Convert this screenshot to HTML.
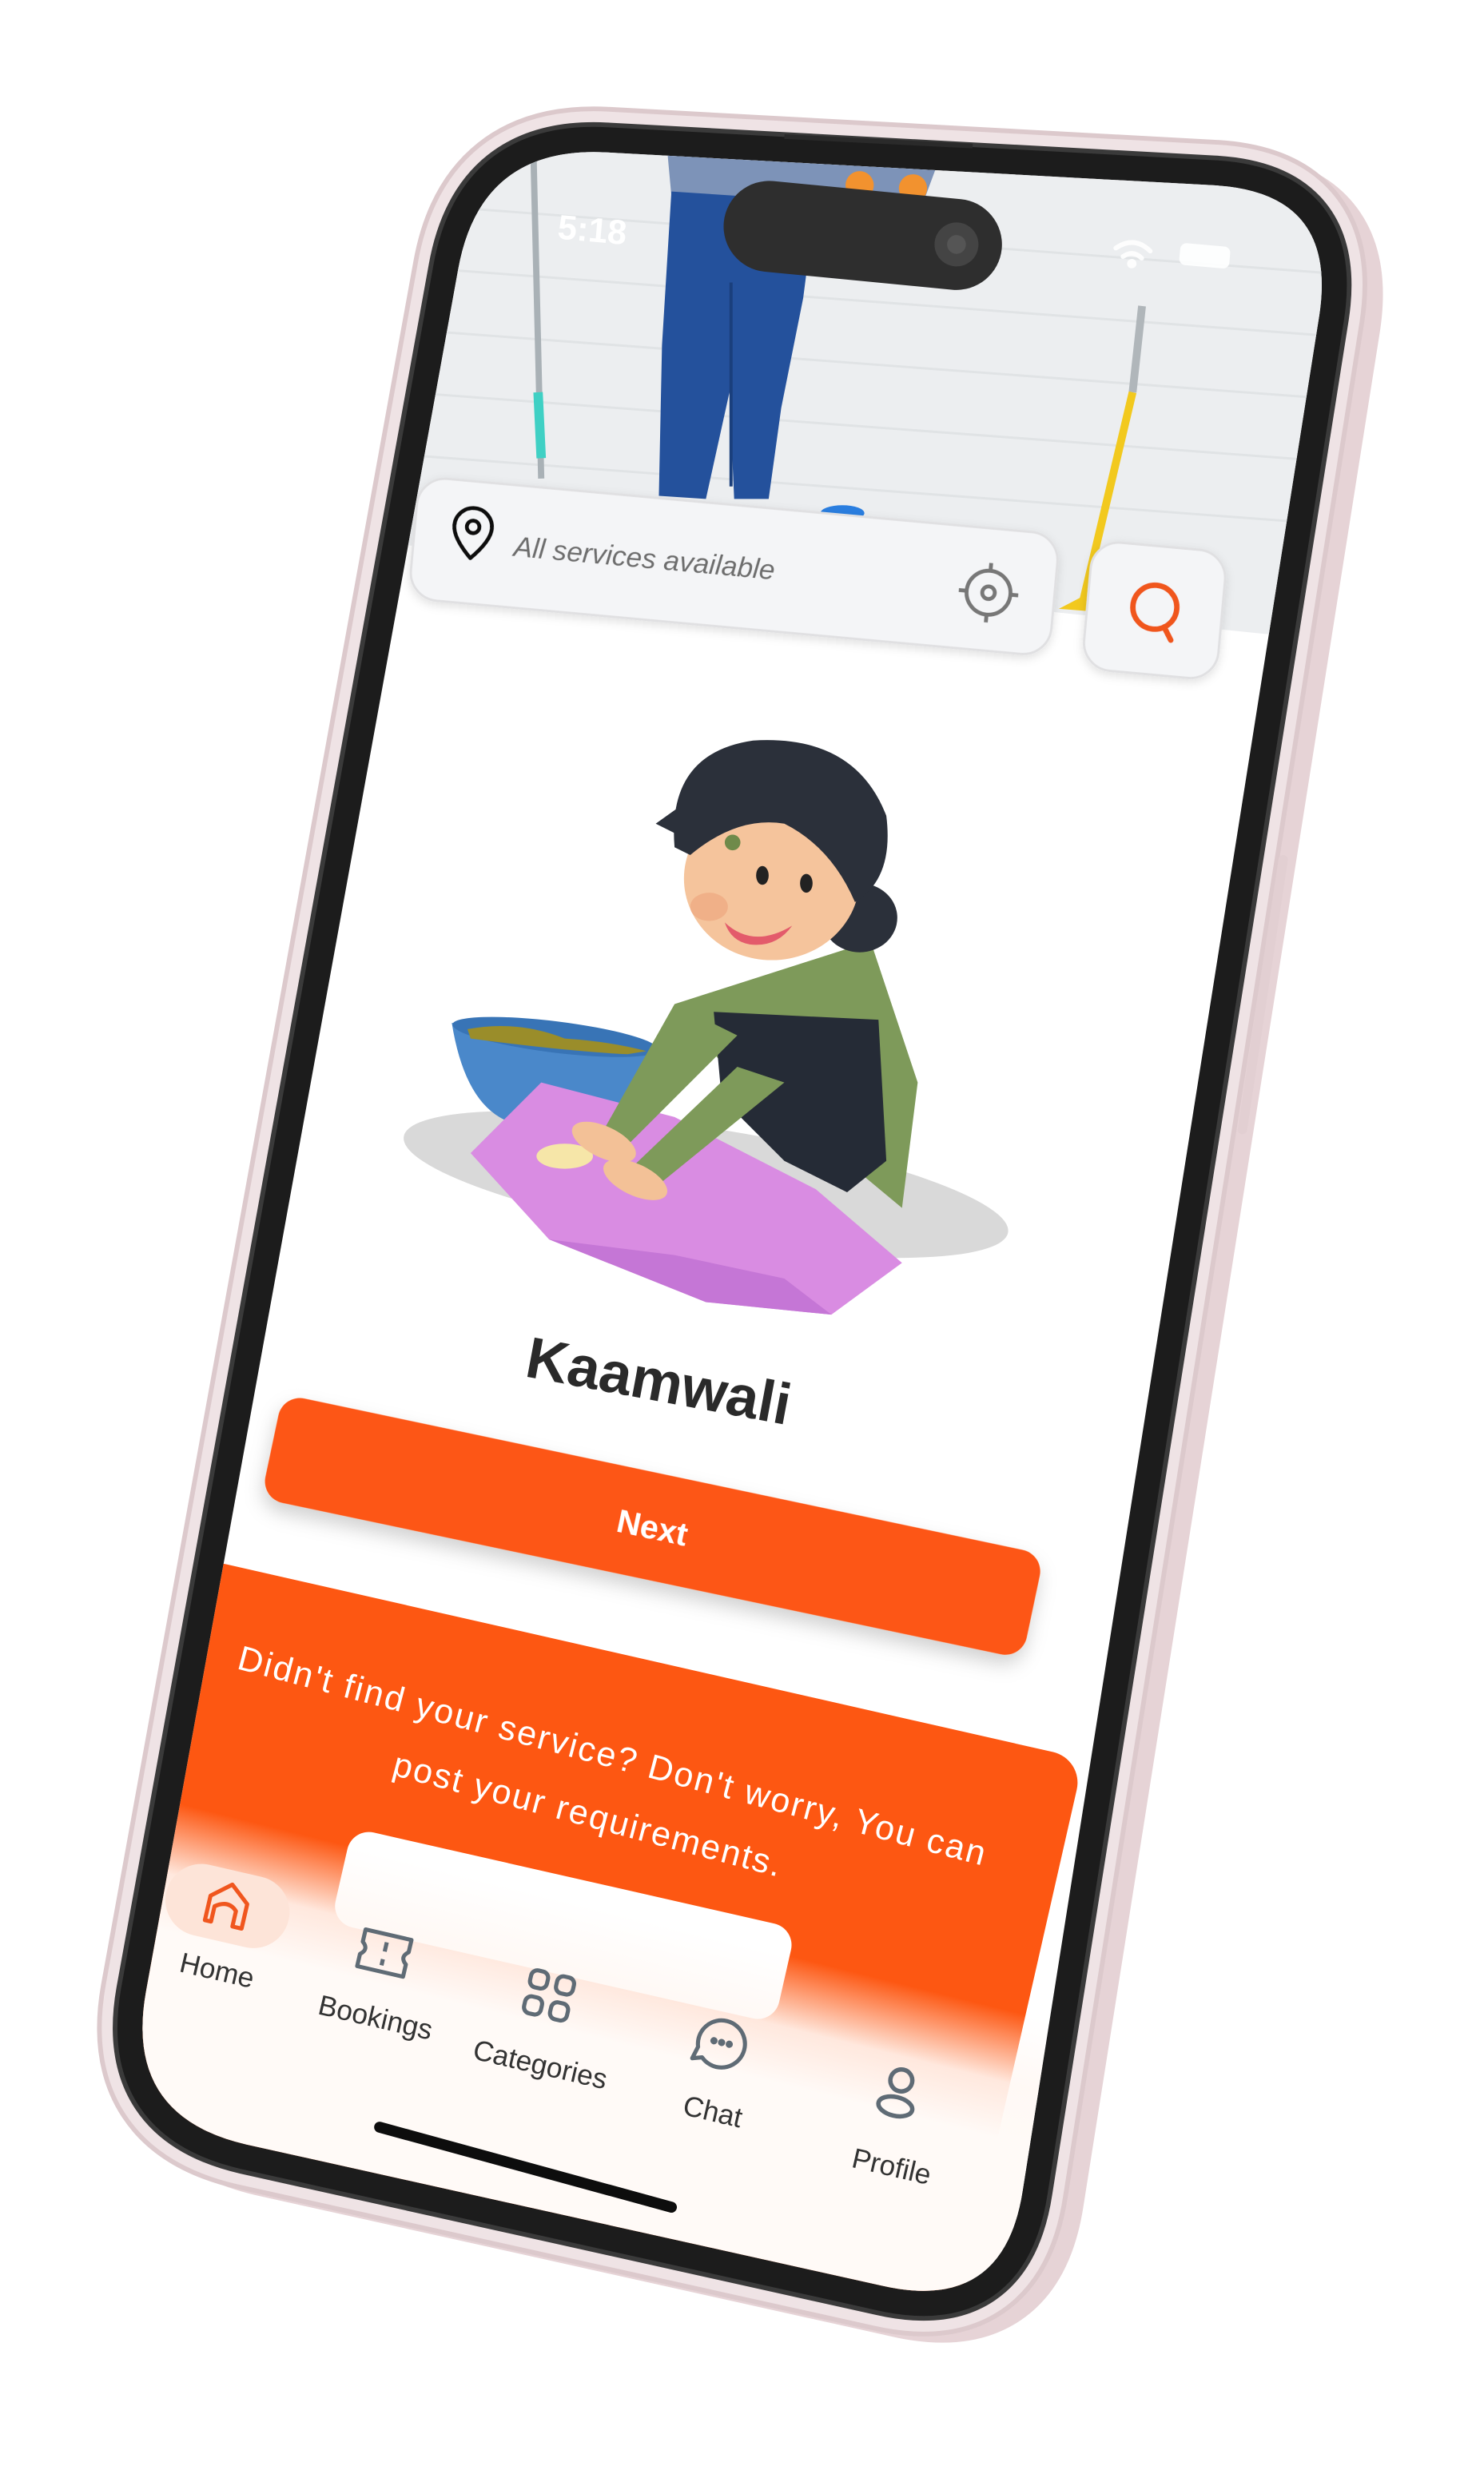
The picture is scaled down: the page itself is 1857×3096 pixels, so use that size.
<!DOCTYPE html>
<html><head><meta charset="utf-8"><style>
html,body{margin:0;padding:0;background:#fff;width:1857px;height:3096px;overflow:hidden;}
svg{display:block;}
text{font-family:"Liberation Sans",sans-serif;}
</style></head><body>
<svg width="1857" height="3096" viewBox="0 0 946 1577" xmlns="http://www.w3.org/2000/svg">
<defs>
<clipPath id="scr"><path d="M386,97 L773,118 Q853,122 841,201 L652,1396 Q640,1475 562,1457 L157,1367 Q79,1349 93,1270 L292,172 Q306,93 386,97 Z"/></clipPath>
<filter id="sh" x="-20%" y="-50%" width="140%" height="200%"><feDropShadow dx="0" dy="6" stdDeviation="6" flood-color="#000" flood-opacity="0.18"/></filter>
<filter id="sh2" x="-20%" y="-50%" width="140%" height="200%"><feDropShadow dx="0" dy="2" stdDeviation="3" flood-color="#000" flood-opacity="0.12"/></filter>
<linearGradient id="tabg" x1="0" y1="0" x2="0" y2="1">
<stop offset="0" stop-color="#fff8f4" stop-opacity="0"/>
<stop offset="0.1" stop-color="#fff8f4" stop-opacity="0.9"/>
<stop offset="0.18" stop-color="#fffaf7" stop-opacity="1"/>
<stop offset="1" stop-color="#fffaf7" stop-opacity="1"/>
</linearGradient>
</defs>

<path transform="translate(12,6)" d="M386,97 L773,118 Q853,122 841,201 L652,1396 Q640,1475 562,1457 L157,1367 Q79,1349 93,1270 L292,172 Q306,93 386,97 Z" fill="#e6d3d6" stroke="#e6d3d6" stroke-width="54" stroke-linejoin="round"/>
<path d="M386,97 L773,118 Q853,122 841,201 L652,1396 Q640,1475 562,1457 L157,1367 Q79,1349 93,1270 L292,172 Q306,93 386,97 Z" fill="#1c1c1c" stroke="#dcc9cc" stroke-width="58" stroke-linejoin="round"/>
<path d="M386,97 L773,118 Q853,122 841,201 L652,1396 Q640,1475 562,1457 L157,1367 Q79,1349 93,1270 L292,172 Q306,93 386,97 Z" fill="#1c1c1c" stroke="#efe3e5" stroke-width="52" stroke-linejoin="round"/>
<path d="M386,97 L773,118 Q853,122 841,201 L652,1396 Q640,1475 562,1457 L157,1367 Q79,1349 93,1270 L292,172 Q306,93 386,97 Z" fill="#1c1c1c" stroke="#3a3a3a" stroke-width="38" stroke-linejoin="round"/>
<path d="M386,97 L773,118 Q853,122 841,201 L652,1396 Q640,1475 562,1457 L157,1367 Q79,1349 93,1270 L292,172 Q306,93 386,97 Z" fill="#1c1c1c" stroke="#1c1c1c" stroke-width="32" stroke-linejoin="round"/>
<path d="M818,548 L792,720" stroke="#e2cfd2" stroke-width="6" stroke-linecap="round"/>

<g clip-path="url(#scr)">
<rect x="0" y="0" width="946" height="1577" fill="#ffffff"/>
<polygon points="200,40 900,40 900,410 806,404 255,347 200,341" fill="#eceef0"/>
<g stroke="#dfe2e4" stroke-width="1.5" opacity="0.9">
<line x1="260" y1="170" x2="860" y2="215"/><line x1="260" y1="210" x2="860" y2="255"/>
<line x1="260" y1="250" x2="860" y2="295"/><line x1="260" y1="290" x2="860" y2="335"/>
<line x1="260" y1="130" x2="860" y2="175"/>
</g>
<polygon points="425,92 600,98 590,125 520,120 470,130 428,125" fill="#7d93b8"/>
<circle cx="548" cy="118" r="9" fill="#f2922f"/><circle cx="582" cy="120" r="9" fill="#f2922f"/>
<path d="M428,122 L520,128 L512,190 L498,260 L490,318 L468,318 L465,250 L450,318 L420,316 L422,220 Z" fill="#24519c"/>
<path d="M466,180 L466,310" stroke="#1a3f7c" stroke-width="2"/>
<line x1="340" y1="95" x2="345" y2="305" stroke="#a9b1b6" stroke-width="4"/>
<line x1="343" y1="250" x2="345" y2="292" stroke="#3fd0c4" stroke-width="6"/>
<line x1="728" y1="195" x2="722" y2="250" stroke="#b0b6ba" stroke-width="5"/>
<line x1="722" y1="250" x2="690" y2="385" stroke="#f2c91e" stroke-width="5"/>
<path d="M675,388 L700,375 L700,390 Z" fill="#f2c91e"/>
<ellipse cx="537" cy="327" rx="14" ry="5" fill="#2a7ee0"/>
<text x="355" y="152" font-size="22" fill="#ffffff" font-weight="bold" transform="rotate(5 355 152)">5:18</text>
<g transform="translate(550,150) rotate(5.5)">
<rect x="-89" y="-29" width="178" height="58" rx="29" fill="#2e2e2e"/>
<circle cx="60" cy="0" r="14" fill="#444"/><circle cx="60" cy="0" r="6" fill="#555"/>
</g>
<g transform="translate(722,162) rotate(5)" fill="none" stroke="#fff" stroke-width="3" stroke-linecap="round" opacity="0.9">
<path d="M-11,-3 Q0,-12 11,-3"/><path d="M-6,2 Q0,-3 6,2"/><circle cx="0" cy="6" r="1.5" fill="#fff"/>
</g>
<rect x="752" y="156" width="32" height="14" rx="4" fill="#fff" opacity="0.9" transform="rotate(5 768 163)"/>

<g transform="translate(468,361) rotate(5.2)" filter="url(#sh2)">
<rect x="-205" y="-39" width="410" height="78" rx="18" fill="#f4f5f7" stroke="#e0e0e2" stroke-width="1.5"/>
<path d="M-168,10 C-178,0 -180,-6 -180,-10 A12,12 0 0 1 -156,-10 C-156,-6 -158,0 -168,10 Z" fill="none" stroke="#111" stroke-width="2.5" stroke-linejoin="round"/>
<circle cx="-168" cy="-10" r="4" fill="none" stroke="#111" stroke-width="2.5"/>
<text x="-141" y="6" font-size="18" fill="#6d6d6d" font-style="italic">All services available</text>
<g transform="translate(163,2)" fill="none" stroke="#777" stroke-width="2.5">
<circle r="14"/><circle r="4"/><line x1="0" y1="-19" x2="0" y2="-14"/><line x1="0" y1="14" x2="0" y2="19"/><line x1="-19" y1="0" x2="-14" y2="0"/><line x1="14" y1="0" x2="19" y2="0"/>
</g>
</g>
<g transform="translate(736,389) rotate(5.2)" filter="url(#sh2)">
<rect x="-43" y="-41" width="86" height="82" rx="18" fill="#f4f5f7" stroke="#e0e0e2" stroke-width="1.5"/>
<circle cx="0" cy="-2" r="14" fill="none" stroke="#f0561e" stroke-width="3.5"/>
<line x1="7" y1="10" x2="12" y2="18" stroke="#f0561e" stroke-width="3.5" stroke-linecap="round"/>
</g>

<ellipse cx="450" cy="755" rx="195" ry="36" fill="#d9d9d9" transform="rotate(9 450 755)"/>
<path d="M288,652 L420,668 L412,705 Q380,728 322,714 Q296,702 288,652 Z" fill="#4a88ca"/>
<ellipse cx="354" cy="661" rx="66" ry="10" fill="#3874b6" transform="rotate(7 354 661)"/>
<path d="M298,656 Q330,650 360,662 Q390,664 412,670 L400,672 Q360,670 300,662 Z" fill="#9a8d2a"/>
<path d="M300,735 L345,690 L430,712 L520,758 L575,805 L530,838 L450,830 L350,790 Z" fill="#d98ce2"/>
<path d="M350,790 L450,830 L530,838 L500,815 L430,800 Z" fill="#c576d6"/>
<ellipse cx="360" cy="737" rx="18" ry="8" fill="#f6e6a8"/>
<path d="M430,640 L555,600 L585,690 L575,770 L545,745 L470,690 Z" fill="#7e9a5a"/>
<path d="M455,645 L560,650 L565,740 L540,760 L500,740 L460,700 Z" fill="#252b36"/>
<path d="M430,640 L470,660 L400,730 L385,720 Z" fill="#7e9a5a"/>
<path d="M470,680 L500,690 L420,755 L405,742 Z" fill="#7e9a5a"/>
<ellipse cx="385" cy="728" rx="22" ry="10" fill="#f3c197" transform="rotate(25 385 728)"/>
<ellipse cx="405" cy="752" rx="22" ry="10" fill="#f3c197" transform="rotate(25 405 752)"/>
<ellipse cx="548" cy="585" rx="24" ry="22" fill="#2b303a"/>
<ellipse cx="492" cy="560" rx="56" ry="52" fill="#f5c49c"/>
<path d="M430,540 Q425,480 480,472 Q545,468 565,520 Q570,560 545,575 Q530,540 500,525 Q470,520 440,545 Z" fill="#2b303a"/>
<path d="M418,525 L432,515 L432,532 Z" fill="#2b303a"/>
<circle cx="467" cy="537" r="5" fill="#6f8a4a"/>
<ellipse cx="486" cy="558" rx="4" ry="6" fill="#222"/><ellipse cx="514" cy="563" rx="4" ry="6" fill="#222"/>
<path d="M462,588 Q480,605 505,590 Q495,604 478,602 Q466,600 462,588 Z" fill="#e35b6b"/>
<ellipse cx="452" cy="578" rx="12" ry="9" fill="#f0b088"/>

<text x="420" y="893" font-size="37" font-weight="bold" fill="#2a2a2a" text-anchor="middle" transform="rotate(10.5 420 880)">Kaamwali</text>

<g transform="translate(416,973) rotate(11.9)" filter="url(#sh)">
<rect x="-248" y="-34" width="496" height="68" rx="14" fill="#fd5712"/>
<text x="0" y="8" font-size="21" font-weight="bold" fill="#fff" text-anchor="middle">Next</text>
</g>

<g transform="translate(135,995) rotate(12.8)">
<rect x="-10" y="0" width="580" height="520" rx="20" fill="#fd5712"/>
<text x="276" y="72" font-size="22" fill="#fff" text-anchor="middle" textLength="492" transform="rotate(2 276 72)">Didn't find your service? Don't worry, You can</text>
<text x="269" y="112" font-size="22" fill="#fff" text-anchor="middle" textLength="255" transform="rotate(2 269 112)">post your requirements.</text>
<rect x="125" y="146" width="290" height="62" rx="14" fill="#fff"/>
</g>

<g transform="translate(95,1150) rotate(14)">
<rect x="-150" y="-5" width="900" height="450" fill="url(#tabg)"/>
</g>
<g transform="translate(145,1215) rotate(13)">
<rect x="-40" y="-23" width="80" height="46" rx="23" fill="#fde4d8"/>
<path d="M-8,12 L-8,2 Q0,-4 6,2 L6,12 L12,12 L12,-4 L0,-14 L-12,-4 L-12,12 Z" fill="none" stroke="#f0561e" stroke-width="2.6" stroke-linejoin="round"/>
</g>
<text x="137" y="1262" font-size="18" fill="#333" text-anchor="middle" transform="rotate(13 137 1262)">Home</text>
<g transform="translate(245,1245) rotate(13)" fill="none" stroke="#5f6b75" stroke-width="2.6">
<path d="M-15,-12 L15,-12 L15,-4 Q10,0 15,4 L15,12 L-15,12 L-15,4 Q-10,0 -15,-4 Z" stroke-linejoin="round"/>
<line x1="0" y1="-7" x2="0" y2="-1"/><line x1="0" y1="4" x2="0" y2="8"/>
</g>
<text x="238" y="1292" font-size="18" fill="#333" text-anchor="middle" transform="rotate(13 238 1292)">Bookings</text>
<g transform="translate(350,1272) rotate(13)" fill="none" stroke="#5f6b75" stroke-width="2.6">
<rect x="-14" y="-14" width="11" height="11" rx="4"/><rect x="3" y="-14" width="11" height="11" rx="4"/>
<rect x="-14" y="3" width="11" height="11" rx="4"/><rect x="3" y="3" width="11" height="11" rx="4"/>
</g>
<text x="343" y="1322" font-size="18" fill="#333" text-anchor="middle" transform="rotate(13 343 1322)">Categories</text>
<g transform="translate(460,1302) rotate(13)" fill="none" stroke="#5f6b75" stroke-width="2.6">
<path d="M-10,12 A15,15 0 1 0 -14,6 L-16,14 Z" stroke-linejoin="round"/>
<circle cx="-5" cy="0" r="1" fill="#5f6b75"/><circle cx="0" cy="0" r="1" fill="#5f6b75"/><circle cx="5" cy="0" r="1" fill="#5f6b75"/>
</g>
<text x="453" y="1352" font-size="18" fill="#333" text-anchor="middle" transform="rotate(13 453 1352)">Chat</text>
<g transform="translate(573,1333) rotate(13)" fill="none" stroke="#5f6b75" stroke-width="2.8">
<circle cx="0" cy="-7" r="7"/><ellipse cx="0" cy="10" rx="11" ry="6"/>
</g>
<text x="567" y="1387" font-size="18" fill="#333" text-anchor="middle" transform="rotate(13 567 1387)">Profile</text>
<line x1="242" y1="1356" x2="428" y2="1407" stroke="#0d0d0d" stroke-width="7" stroke-linecap="round"/>
</g>
<line x1="500" y1="87" x2="620" y2="93" stroke="#2a2a2a" stroke-width="3"/>
</svg>
</body></html>
